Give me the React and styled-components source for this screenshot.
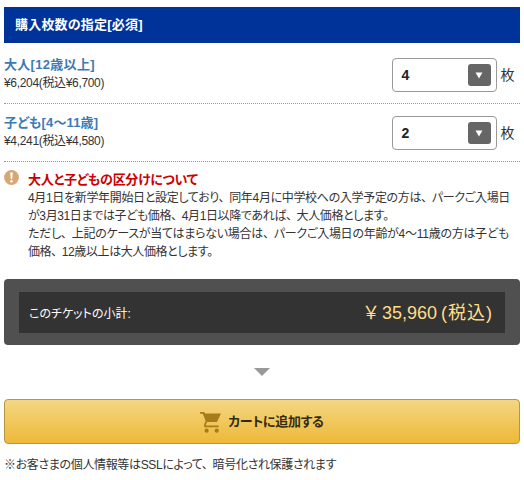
import React from "react";
import styled, { createGlobalStyle } from "styled-components";

const GlobalStyle = createGlobalStyle`
  body {
    margin: 0;
    background: #fff;
    color: #333;
    font-family: "Liberation Sans", "Noto Sans CJK JP", sans-serif;
    font-size: 13px;
    font-feature-settings: "palt";
  }
`;

const Root = styled.main`
  box-sizing: border-box;
  width: 524px;
  padding: 7px 4px 0;
`;

const Line = styled.span`
  display: block;
  white-space: nowrap;
  letter-spacing: ${({ $tracking }) => $tracking ?? 0}px;
`;

const Comma = styled.span`
  margin-right: 5px;
`;

const Heading = styled.h2`
  box-sizing: border-box;
  height: 36px;
  margin: 0;
  padding: 0 11px;
  background: #039;
  color: #fff;
  font-size: 13px;
  line-height: 35px;
`;

const TicketRow = styled.div`
  box-sizing: border-box;
  display: flex;
  justify-content: space-between;
  height: ${({ $height }) => $height}px;
  padding: ${({ $top }) => $top}px 6px 0 0;
  border-bottom: 1px dotted #999;
`;

const TicketName = styled.div`
  color: #3c7ab5;
  font-weight: bold;
  line-height: 20px;
`;

const TicketPrice = styled.div`
  font-size: 12px;
  line-height: 17px;
`;

const Quantity = styled.div`
  display: flex;
  align-items: center;
  gap: 4px;
  height: 34px;
  margin-top: 3px;
  font-size: 14px;
`;

const Unit = styled.span`
  padding-bottom: 3px;
  letter-spacing: -0.6px;
`;

const Select = styled.button`
  box-sizing: border-box;
  display: flex;
  align-items: center;
  justify-content: space-between;
  width: 105px;
  height: 34px;
  padding: 0 5px 0 9px;
  border: 1px solid #999;
  border-radius: 4px;
  background: #fff;
  color: #222;
  font-family: inherit;
  font-size: 14px;
  font-weight: bold;
`;

const SelectArrow = styled.span`
  display: flex;
  align-items: center;
  justify-content: center;
  width: 23px;
  height: 22px;
  border-radius: 3px;
  background: #666;
`;

const Notice = styled.section`
  box-sizing: border-box;
  display: flex;
  gap: 9px;
  height: 117px;
  padding-top: 8px;
`;

const NoticeTitle = styled.div`
  color: #c00;
  font-weight: bold;
  line-height: 19px;
`;

const NoticeText = styled.div`
  font-size: 12px;
  line-height: 18px;
`;

const Subtotal = styled.section`
  box-sizing: border-box;
  height: 66px;
  padding: 13px 15px 12px;
  border-radius: 4px;
  background: #505050;
`;

const SubtotalInner = styled.div`
  display: flex;
  align-items: center;
  justify-content: space-between;
  height: 41px;
  padding: 0 12px 0 10px;
  background: #333;
  color: #fff;
  font-size: 12px;
`;

const SubtotalPrice = styled.div`
  display: flex;
  align-items: baseline;
  gap: 4px;
  color: #fd8;
  font-size: 18px;
  line-height: 38px;
`;

const Yen = styled.span`
  margin-right: -2px;
  font-family: "Noto Sans CJK JP", sans-serif;
  font-feature-settings: normal;
  line-height: 1;
`;

const StepArrow = styled.div`
  display: flex;
  justify-content: center;
  height: 31px;
  padding-top: 23px;
`;

const CartButton = styled.button`
  box-sizing: border-box;
  display: flex;
  align-items: center;
  justify-content: center;
  gap: 7px;
  width: 100%;
  height: 45px;
  padding: 1px 0 0;
  border: 1px solid #b59643;
  border-radius: 4px;
  background: linear-gradient(#f4d683, #edb937);
  color: #332b11;
  font-family: inherit;
  font-feature-settings: inherit;
  font-size: 13px;
  font-weight: bold;
`;

const CartLabel = styled.span`
  padding-bottom: 4px;
`;

const Footnote = styled.p`
  margin: 11px 0 0;
  font-size: 12px;
  line-height: 20px;
`;

const tickets = [
  {
    name: "大人[12歳以上]",
    price: "¥6,204(税込¥6,700)",
    count: 4,
    height: 61,
    top: 12,
    tracking: 0.3,
  },
  {
    name: "子ども[4〜11歳]",
    price: "¥4,241(税込¥4,580)",
    count: 2,
    height: 58,
    top: 9,
    tracking: 0.15,
  },
];

const noticeLines = [
  {
    text: "4月1日を新学年開始日と設定しており、同年4月に中学校への入学予定の方は、パークご入場日",
    tracking: -0.33,
  },
  {
    text: "が3月31日までは子ども価格、4月1日以降であれば、大人価格とします。",
    tracking: -0.38,
  },
  {
    text: "ただし、上記のケースが当てはまらない場合は、パークご入場日の年齢が4〜11歳の方は子ども",
    tracking: -0.27,
  },
  { text: "価格、12歳以上は大人価格とします。", tracking: -0.4 },
];

const NoticeIcon = () => (
  <svg width="15" height="15" viewBox="0 0 15 15">
    <circle cx="7.5" cy="7.5" r="7.4" fill="#d6a673" />
    <path d="M6.2 2.5h2.6l-.6 6.4H6.8z" fill="#fff" />
    <circle cx="7.5" cy="11.2" r="1.3" fill="#fff" />
  </svg>
);

const CartIcon = () => (
  <svg width="21" height="21" viewBox="0 0 21 21" fill="#a67c1b">
    <path d="M0 0h4.200l.8 1.500H21l-4 8.500H7.200l-1.200 2.200v1.300h12.600v1.700H4.200V11.900l1.500-2.700L2.800 1.700H0z" />
    <circle cx="6.600" cy="18.700" r="2.100" />
    <circle cx="16.700" cy="18.700" r="2.100" />
  </svg>
);

// Commas keep their full-width space while the kana around them are set tight.
const Sentence = ({ text, tracking }) => (
  <Line $tracking={tracking}>
    {text.split("、").map((part, i) => (
      <React.Fragment key={part}>
        {i > 0 && <Comma>、</Comma>}
        {part}
      </React.Fragment>
    ))}
  </Line>
);

const TicketItem = ({ ticket }) => (
  <TicketRow $height={ticket.height} $top={ticket.top}>
    <div>
      <TicketName>
        <Line $tracking={ticket.tracking}>{ticket.name}</Line>
      </TicketName>
      <TicketPrice>
        <Line $tracking={-0.33}>{ticket.price}</Line>
      </TicketPrice>
    </div>
    <Quantity>
      <Select type="button">
        {ticket.count}
        <SelectArrow>
          <svg width="8" height="7" viewBox="0 0 8 7">
            <path d="M.5.5h7L4 6.500z" fill="#fff" />
          </svg>
        </SelectArrow>
      </Select>
      <Unit>枚</Unit>
    </Quantity>
  </TicketRow>
);

export default function App() {
  return (
    <>
      <GlobalStyle />
      <Root>
        <Heading>
          <Line $tracking={0.2}>購入枚数の指定[必須]</Line>
        </Heading>
        {tickets.map(ticket => (
          <TicketItem key={ticket.name} ticket={ticket} />
        ))}
        <Notice>
          <NoticeIcon />
          <div>
            <NoticeTitle>
              <Line $tracking={-0.3}>大人と子どもの区分けについて</Line>
            </NoticeTitle>
            <NoticeText>
              {noticeLines.map(line => (
                <Sentence
                  key={line.text}
                  text={line.text}
                  tracking={line.tracking}
                />
              ))}
            </NoticeText>
          </div>
        </Notice>
        <Subtotal>
          <SubtotalInner>
            <Line>このチケットの小計:</Line>
            <SubtotalPrice>
              <Yen>{"\uffe5"}</Yen>
              <Line>35,960</Line>
              <Line $tracking={1}>(税込)</Line>
            </SubtotalPrice>
          </SubtotalInner>
        </Subtotal>
        <StepArrow>
          <svg width="16" height="8" viewBox="0 0 16 8">
            <path d="M0 0h16L8 8z" fill="#999" />
          </svg>
        </StepArrow>
        <CartButton type="button">
          <CartIcon />
          <CartLabel>
            <Line $tracking={-0.3}>カートに追加する</Line>
          </CartLabel>
        </CartButton>
        <Footnote>
          <Sentence
            text="※お客さまの個人情報等はSSLによって、暗号化され保護されます"
            tracking={-0.35}
          />
        </Footnote>
      </Root>
    </>
  );
}
